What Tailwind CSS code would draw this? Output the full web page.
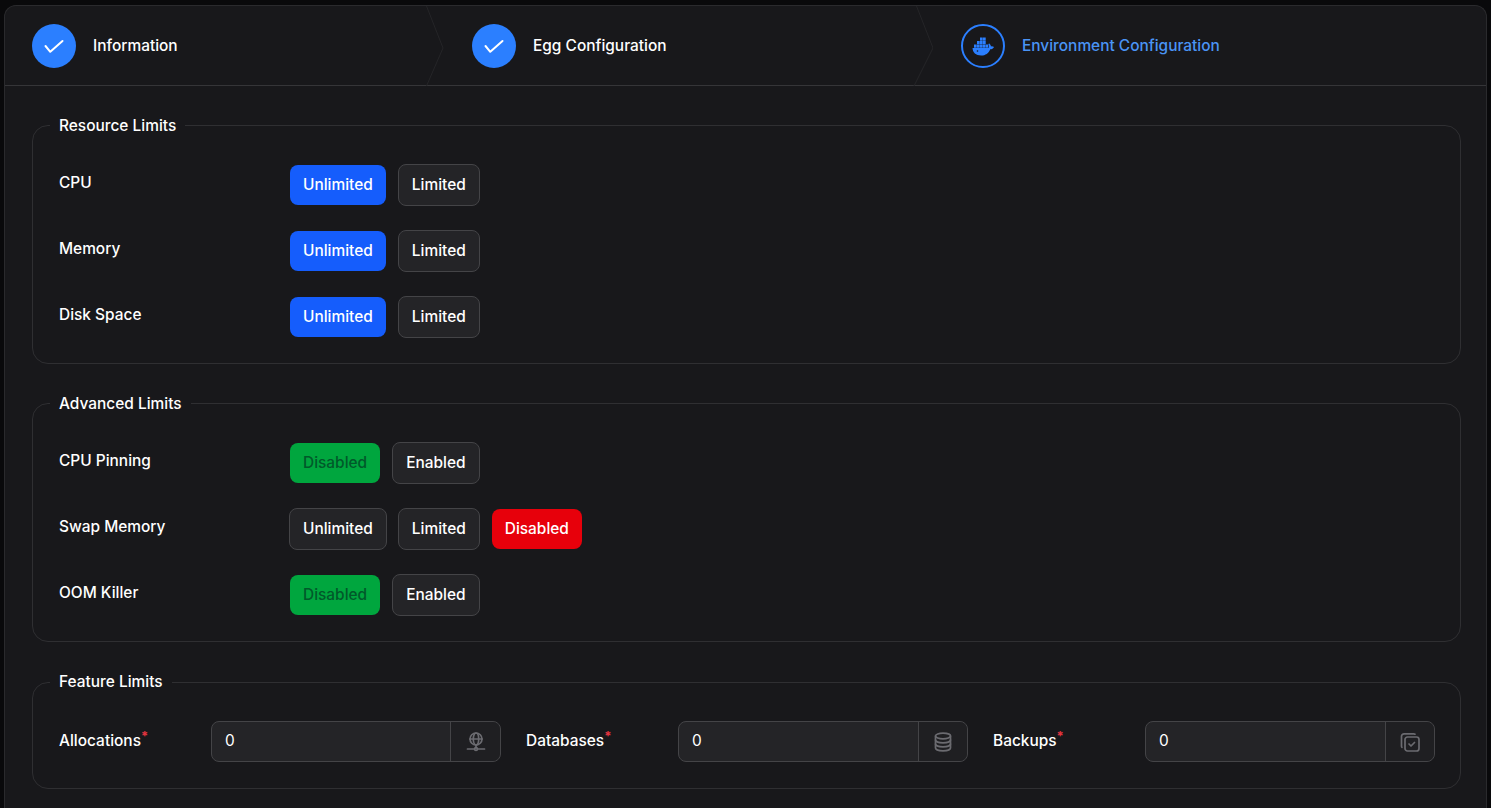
<!DOCTYPE html>
<html lang="en">
<head>
    <meta charset="UTF-8">
    <title>Environment Configuration</title>
    <script src="https://cdn.jsdelivr.net/npm/@tailwindcss/browser@4"></script>
</head>
<body class="bg-[#09090b] font-['Inter',sans-serif] text-white text-[15.45px] leading-5 h-[808px] overflow-hidden">
    <div class="ml-1 mr-1 mt-[5px] w-[1483px] h-[803px] overflow-hidden bg-[#18181b] border border-[#2a2a2d] border-b-0 rounded-t-xl">

        <!-- steps -->
        <div class="grid grid-cols-[439px_489px_1fr] h-20 border-b border-[#353538]">
            <div class="relative flex items-center gap-[17px] pl-[27px]">
                <div class="w-11 h-11 rounded-full bg-[#2b7fff] flex items-center justify-center">
                    <svg class="w-6 h-6" viewBox="0 0 24 24" fill="none" stroke="white" stroke-width="2" stroke-linecap="round" stroke-linejoin="round"><path d="M3.500 12l4.800 5.800L20.500 7"/></svg>
                </div>
                <span class="font-medium">Information</span>
                <svg class="absolute right-0 top-0 w-[20px] h-[80px]" viewBox="0 0 20 80" fill="none" stroke="#252528"><path d="M2.500 0L19 42L2.500 80"/></svg>
            </div>
            <div class="relative flex items-center gap-[17px] pl-[28px]">
                <div class="w-11 h-11 rounded-full bg-[#2b7fff] flex items-center justify-center">
                    <svg class="w-6 h-6" viewBox="0 0 24 24" fill="none" stroke="white" stroke-width="2" stroke-linecap="round" stroke-linejoin="round"><path d="M3.500 12l4.800 5.800L20.500 7"/></svg>
                </div>
                <span class="font-medium">Egg Configuration</span>
                <svg class="absolute right-0 top-0 w-[20px] h-[80px]" viewBox="0 0 20 80" fill="none" stroke="#252528"><path d="M3.500 0L20 42L1 80"/></svg>
            </div>
            <div class="flex items-center gap-[17px] pl-[28px]">
                <div class="w-11 h-11 rounded-full border-2 border-[#2b7fff] flex items-center justify-center">
                    <svg class="w-6 h-6" viewBox="0 0 24 24" fill="#2b7fff">
                        <rect x="9" y="3.500" width="2.700" height="3.200"/><rect x="12" y="3.500" width="2.700" height="3.200"/>
                        <rect x="6" y="7" width="2.700" height="3.200"/><rect x="9" y="7" width="2.700" height="3.200"/><rect x="12" y="7" width="2.700" height="3.200"/>
                        <rect x="3" y="10.500" width="2.700" height="3.200"/><rect x="6" y="10.500" width="2.700" height="3.200"/><rect x="9" y="10.500" width="2.700" height="3.200"/><rect x="12" y="10.500" width="2.700" height="3.200"/><rect x="15" y="10.500" width="2.200" height="3.200"/>
                        <path d="M1.500 14h16c.600-1.200.500-2.800-.200-4l1-.600c1 .800 1.600 1.900 1.700 3 1-.200 2-.100 3 .500-.700 1.500-2.100 2.300-3.800 2.300-1.500 4-4.700 6.300-9 6.300-5.300 0-8.700-2.700-8.700-8z"/>
                        <circle cx="6.500" cy="17" r="0.800" fill="#18181b"/>
                    </svg>
                </div>
                <span class="font-medium text-[#4a94f5]">Environment Configuration</span>
            </div>
        </div>

        <div class="pl-[27px] pr-[25px] pt-[29px] flex flex-col gap-[29px]">

            <fieldset class="border border-[#2f2f32] rounded-2xl pl-[26px] pr-[25px] pt-[29px] pb-[25px]">
                <legend class="relative top-px font-medium px-[9px] -ml-[9px]">Resource Limits</legend>
                <div class="flex flex-col gap-6">
                    <div class="flex items-start h-[42px]">
                        <div class="w-[231px] pt-[9px] font-medium">CPU</div>
                        <div class="flex items-center gap-3">
                            <button class="h-10 px-[13px] rounded-lg bg-[#155dfc] font-medium">Unlimited</button>
                            <button class="h-[42px] px-[13px] rounded-lg bg-[#242427] border border-[#444447] font-medium">Limited</button>
                        </div>
                    </div>
                    <div class="flex items-start h-[42px]">
                        <div class="w-[231px] pt-[9px] font-medium">Memory</div>
                        <div class="flex items-center gap-3">
                            <button class="h-10 px-[13px] rounded-lg bg-[#155dfc] font-medium">Unlimited</button>
                            <button class="h-[42px] px-[13px] rounded-lg bg-[#242427] border border-[#444447] font-medium">Limited</button>
                        </div>
                    </div>
                    <div class="flex items-start h-[42px]">
                        <div class="w-[231px] pt-[9px] font-medium">Disk Space</div>
                        <div class="flex items-center gap-3">
                            <button class="h-10 px-[13px] rounded-lg bg-[#155dfc] font-medium">Unlimited</button>
                            <button class="h-[42px] px-[13px] rounded-lg bg-[#242427] border border-[#444447] font-medium">Limited</button>
                        </div>
                    </div>
                </div>
            </fieldset>

            <fieldset class="border border-[#2f2f32] rounded-2xl pl-[26px] pr-[25px] pt-[29px] pb-[25px]">
                <legend class="relative top-px font-medium px-[9px] -ml-[9px]">Advanced Limits</legend>
                <div class="flex flex-col gap-6">
                    <div class="flex items-start h-[42px]">
                        <div class="w-[231px] pt-[9px] font-medium">CPU Pinning</div>
                        <div class="flex items-center gap-3">
                            <button class="h-10 px-[13px] rounded-lg bg-[#00a63e] text-[#00592a] font-medium">Disabled</button>
                            <button class="h-[42px] px-[13px] rounded-lg bg-[#242427] border border-[#444447] font-medium">Enabled</button>
                        </div>
                    </div>
                    <div class="flex items-start h-[42px]">
                        <div class="w-[230px] pt-[9px] font-medium">Swap Memory</div>
                        <div class="flex items-center">
                            <button class="h-[42px] px-[13px] rounded-lg bg-[#242427] border border-[#444447] font-medium">Unlimited</button>
                            <button class="ml-[11px] h-[42px] px-[13px] rounded-lg bg-[#242427] border border-[#444447] font-medium">Limited</button>
                            <button class="ml-3 h-10 px-[13px] rounded-lg bg-[#e7000b] font-medium">Disabled</button>
                        </div>
                    </div>
                    <div class="flex items-start h-[42px]">
                        <div class="w-[231px] pt-[9px] font-medium">OOM Killer</div>
                        <div class="flex items-center gap-3">
                            <button class="h-10 px-[13px] rounded-lg bg-[#00a63e] text-[#00592a] font-medium">Disabled</button>
                            <button class="h-[42px] px-[13px] rounded-lg bg-[#242427] border border-[#444447] font-medium">Enabled</button>
                        </div>
                    </div>
                </div>
            </fieldset>

            <fieldset class="mt-px border border-[#2f2f32] rounded-2xl pl-[26px] pr-[25px] pt-[29px] pb-[26px]">
                <legend class="font-medium px-[9px] -ml-[9px]">Feature Limits</legend>
                <div class="grid grid-cols-3 gap-[25px]">
                    <div class="flex items-center">
                        <div class="w-[152px] pb-[2px] font-medium">Allocations<span class="text-[#e5343f] text-[13px] font-bold relative -top-[5px] leading-none">*</span></div>
                        <div class="flex flex-1 h-[41px] rounded-lg bg-[#242427] border border-[#444447]">
                            <div class="flex-1 px-[13px] pb-[2px] flex items-center">0</div>
                            <div class="w-[50px] border-l border-[#444447] bg-[#1f1f22] rounded-r-lg flex items-center justify-center">
                                <svg class="w-5 h-5" viewBox="0 0 20 20" fill="none" stroke="#6b6b70" stroke-width="1.700" stroke-linecap="round" stroke-linejoin="round"><circle cx="10" cy="7" r="6"/><ellipse cx="10" cy="7" rx="2.700" ry="6"/><path d="M4 7h12M10 13v3"/><circle cx="10" cy="17" r="1.400"/><path d="M1.500 17h7M11.500 17h7"/></svg>
                            </div>
                        </div>
                    </div>
                    <div class="flex items-center">
                        <div class="w-[152px] pb-[2px] font-medium">Databases<span class="text-[#e5343f] text-[13px] font-bold relative -top-[5px] leading-none">*</span></div>
                        <div class="flex flex-1 h-[41px] rounded-lg bg-[#242427] border border-[#444447]">
                            <div class="flex-1 px-[13px] pb-[2px] flex items-center">0</div>
                            <div class="w-[49px] border-l border-[#444447] bg-[#1f1f22] rounded-r-lg flex items-center justify-center">
                                <svg class="w-5 h-5" viewBox="0 0 20 20" fill="none" stroke="#6b6b70" stroke-width="1.700" stroke-linecap="round" stroke-linejoin="round"><ellipse cx="10" cy="4" rx="7.500" ry="2.800"/><path d="M2.500 4v12c0 1.600 3.400 2.800 7.500 2.800s7.500-1.200 7.500-2.800V4"/><path d="M2.500 8c0 1.600 3.400 2.800 7.500 2.800s7.500-1.200 7.500-2.800"/><path d="M2.500 12c0 1.600 3.400 2.800 7.500 2.800s7.500-1.200 7.500-2.800"/></svg>
                            </div>
                        </div>
                    </div>
                    <div class="flex items-center">
                        <div class="w-[152px] pb-[2px] font-medium">Backups<span class="text-[#e5343f] text-[13px] font-bold relative -top-[5px] leading-none">*</span></div>
                        <div class="flex flex-1 h-[41px] rounded-lg bg-[#242427] border border-[#444447]">
                            <div class="flex-1 px-[13px] pb-[2px] flex items-center">0</div>
                            <div class="w-[49px] border-l border-[#444447] bg-[#1f1f22] rounded-r-lg flex items-center justify-center">
                                <svg class="w-5 h-5" viewBox="0 0 20 20" fill="none" stroke="#6b6b70" stroke-width="1.700" stroke-linecap="round" stroke-linejoin="round"><rect x="5" y="5" width="14" height="14" rx="2.500"/><path d="M15 2.200c-.400-.300-.800-.400-1.300-.400H4a2.500 2.500 0 0 0-2.500 2.500v9.700c0 .500.100.900.400 1.300"/><path d="M9 12l2 2 3.500-3.500"/></svg>
                            </div>
                        </div>
                    </div>
                </div>
            </fieldset>
        </div>
    </div>
</body>
</html>
